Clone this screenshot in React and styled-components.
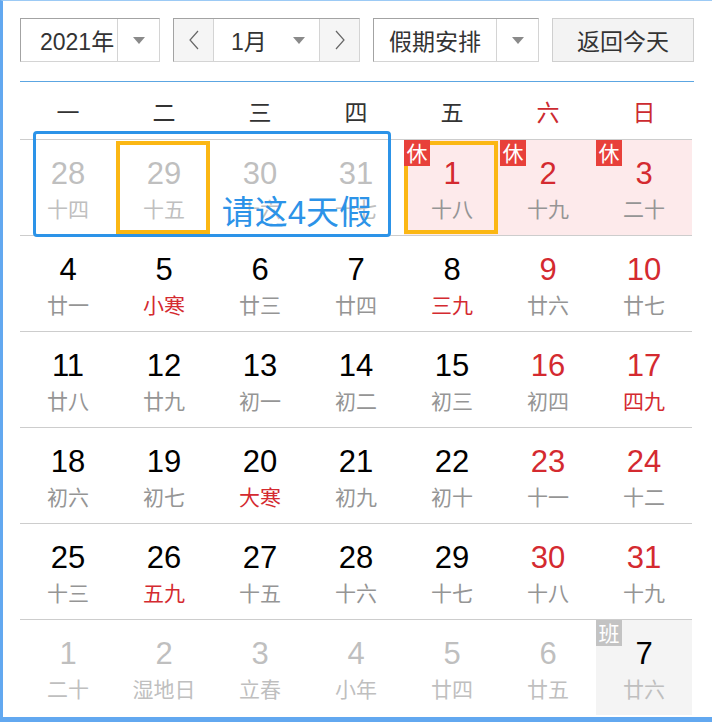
import React from 'react';
import styled, { createGlobalStyle } from 'styled-components';

const GlobalStyle = createGlobalStyle`
  html, body {
    margin: 0;
    padding: 0;
    background: #fff;
  }
  body {
    font-family: "Liberation Sans", "Noto Sans CJK SC", sans-serif;
  }
`;

const Frame = styled.div`
  width: 712px;
  height: 722px;
  box-sizing: border-box;
  border-left: 3px solid #62a8f0;
  border-top: 1px solid #9ccaf5;
  border-bottom: 5px solid #62a8f0;
  padding: 17px 0 0 17px;
  overflow: hidden;
`;

const Toolbar = styled.div`
  display: flex;
  gap: 13px;
  height: 44px;
  width: 674px;
`;

const Select = styled.div`
  display: flex;
  height: 44px;
  box-sizing: border-box;
  border-top: 1px solid #a3a3a3;
  border-left: 1px solid #a3a3a3;
  border-right: 1px solid #d4d4d4;
  border-bottom: 1px solid #d4d4d4;
  background: #fff;
`;

const SelectText = styled.div`
  width: ${({ w }) => w}px;
  display: flex;
  align-items: center;
  justify-content: ${({ pad }) => (pad ? 'flex-start' : 'center')};
  padding-left: ${({ pad }) => pad || 0}px;
  box-sizing: border-box;
  font-size: 23px;
  color: #333;
`;

const ArrowBox = styled.div`
  width: ${({ w }) => w || 42}px;
  display: flex;
  align-items: center;
  justify-content: center;
  border-left: ${({ plain }) => (plain ? 'none' : '1px solid #d4d4d4')};
`;

const Caret = styled.span`
  width: 0;
  height: 0;
  border-left: 6px solid transparent;
  border-right: 6px solid transparent;
  border-top: 7px solid #8a8a8a;
`;

const NavButton = styled.div`
  width: ${({ w }) => w}px;
  display: flex;
  align-items: center;
  justify-content: center;
  background: #f5f5f5;
  border-left: ${({ divider }) => (divider ? '1px solid #d4d4d4' : 'none')};
  border-right: ${({ divRight }) => (divRight ? '1px solid #d4d4d4' : 'none')};
`;

const TodayButton = styled.div`
  width: 144px;
  height: 44px;
  box-sizing: border-box;
  border: 1px solid #cfcfcf;
  background: #f3f3f3;
  display: flex;
  align-items: center;
  justify-content: center;
  font-size: 23px;
  color: #333;
`;

const Divider = styled.div`
  width: 674px;
  height: 1px;
  background: #5ca6e2;
  margin-top: 19px;
`;

const Board = styled.div`
  width: 672px;
`;

const WeekHeader = styled.div`
  display: grid;
  grid-template-columns: repeat(7, 96px);
  height: 57px;
`;

const WeekDay = styled.div`
  display: flex;
  align-items: center;
  justify-content: center;
  font-size: 23px;
  color: ${({ red }) => (red ? '#cc2a30' : '#333')};
`;

const Row = styled.div`
  position: relative;
  display: grid;
  grid-template-columns: repeat(7, 96px);
  height: 96px;
  box-sizing: border-box;
  border-top: 1px solid #cdcdcd;
`;

const Cell = styled.div`
  position: relative;
  display: flex;
  flex-direction: column;
  align-items: center;
  padding-top: 17px;
  background: ${({ bg }) => bg || 'transparent'};
`;

const DayNum = styled.div`
  font-size: 31px;
  line-height: 34px;
  color: ${({ c }) => c};
`;

const Lunar = styled.div`
  margin-top: 6px;
  font-size: 21px;
  line-height: 25px;
  color: ${({ c }) => c};
`;

const Badge = styled.div`
  position: absolute;
  left: 0;
  top: 0;
  width: 26px;
  height: 26px;
  display: flex;
  align-items: center;
  justify-content: center;
  font-size: 21px;
  line-height: 1;
  color: #fff;
  background: ${({ bg }) => bg};
  z-index: 3;
`;

const PickBox = styled.div`
  position: absolute;
  left: 0;
  top: 1px;
  width: 94px;
  height: 93px;
  box-sizing: border-box;
  border: 4px solid #fbb714;
  z-index: 2;
`;

const LeaveBox = styled.div`
  position: absolute;
  left: 13px;
  top: -9px;
  width: 358px;
  height: 106px;
  box-sizing: border-box;
  border: 3px solid #2c93e8;
  border-radius: 4px;
  z-index: 4;
  pointer-events: none;
`;

const LeaveText = styled.div`
  position: absolute;
  right: 16px;
  bottom: 0;
  font-size: 33px;
  line-height: 42px;
  color: #2c93e8;
`;

const Chevron = ({ dir }) => (
  <svg width="12" height="22" viewBox="0 0 12 22">
    <path
      d={dir === 'left' ? 'M10 2 L2 11 L10 20' : 'M2 2 L10 11 L2 20'}
      fill="none"
      stroke="#666"
      strokeWidth="1.2"
    />
  </svg>
);

const BLACK = '#000';
const RED = '#d42a30';
const GREY = '#959595';
const FAINT = '#bfbfbf';
const PINK = '#fdeaeb';

// n: day, l: lunar, t: type
const rows = [
  [
    { n: 28, l: '十四', t: 'other' },
    { n: 29, l: '十五', t: 'other', pick: true },
    { n: 30, l: '十六', t: 'other' },
    { n: 31, l: '十七', t: 'other' },
    { n: 1, l: '十八', t: 'rest', pick: true },
    { n: 2, l: '十九', t: 'rest' },
    { n: 3, l: '二十', t: 'rest' },
  ],
  [
    { n: 4, l: '廿一' },
    { n: 5, l: '小寒', term: true },
    { n: 6, l: '廿三' },
    { n: 7, l: '廿四' },
    { n: 8, l: '三九', term: true },
    { n: 9, l: '廿六', t: 'weekend' },
    { n: 10, l: '廿七', t: 'weekend' },
  ],
  [
    { n: 11, l: '廿八' },
    { n: 12, l: '廿九' },
    { n: 13, l: '初一' },
    { n: 14, l: '初二' },
    { n: 15, l: '初三' },
    { n: 16, l: '初四', t: 'weekend' },
    { n: 17, l: '四九', t: 'weekend', term: true },
  ],
  [
    { n: 18, l: '初六' },
    { n: 19, l: '初七' },
    { n: 20, l: '大寒', term: true },
    { n: 21, l: '初九' },
    { n: 22, l: '初十' },
    { n: 23, l: '十一', t: 'weekend' },
    { n: 24, l: '十二', t: 'weekend' },
  ],
  [
    { n: 25, l: '十三' },
    { n: 26, l: '五九', term: true },
    { n: 27, l: '十五' },
    { n: 28, l: '十六' },
    { n: 29, l: '十七' },
    { n: 30, l: '十八', t: 'weekend' },
    { n: 31, l: '十九', t: 'weekend' },
  ],
  [
    { n: 1, l: '二十', t: 'other' },
    { n: 2, l: '湿地日', t: 'other' },
    { n: 3, l: '立春', t: 'other' },
    { n: 4, l: '小年', t: 'other' },
    { n: 5, l: '廿四', t: 'other' },
    { n: 6, l: '廿五', t: 'other' },
    { n: 7, l: '廿六', t: 'work' },
  ],
];

const cellLook = (d) => {
  switch (d.t) {
    case 'other':
      return { num: FAINT, lunar: FAINT };
    case 'rest':
      return { num: RED, lunar: GREY, bg: PINK, badge: '休', badgeBg: '#e8403a' };
    case 'weekend':
      return { num: RED, lunar: d.term ? RED : GREY };
    case 'work':
      return { num: BLACK, lunar: FAINT, bg: '#f4f4f4', badge: '班', badgeBg: '#c3c3c3' };
    default:
      return { num: BLACK, lunar: d.term ? RED : GREY };
  }
};

const weekDays = ['一', '二', '三', '四', '五', '六', '日'];

export default function App() {
  return (
    <>
      <GlobalStyle />
      <Frame>
        <Toolbar>
          <Select>
            <SelectText w={96} pad={19}>2021年</SelectText>
            <ArrowBox w={41}>
              <Caret />
            </ArrowBox>
          </Select>
          <Select>
            <NavButton w={39} divRight>
              <Chevron dir="left" />
            </NavButton>
            <SelectText w={64} pad={17}>1月</SelectText>
            <ArrowBox w={41} plain>
              <Caret />
            </ArrowBox>
            <NavButton w={39} divider>
              <Chevron dir="right" />
            </NavButton>
          </Select>
          <Select>
            <SelectText w={122}>假期安排</SelectText>
            <ArrowBox w={41}>
              <Caret />
            </ArrowBox>
          </Select>
          <TodayButton>返回今天</TodayButton>
        </Toolbar>
        <Divider />
        <Board>
          <WeekHeader>
            {weekDays.map((w, i) => (
              <WeekDay key={w} red={i >= 5}>
                {w}
              </WeekDay>
            ))}
          </WeekHeader>
          {rows.map((row, ri) => (
            <Row key={ri}>
              {row.map((d, ci) => {
                const look = cellLook(d);
                return (
                  <Cell key={ci} bg={look.bg}>
                    {look.badge && <Badge bg={look.badgeBg}>{look.badge}</Badge>}
                    {d.pick && <PickBox />}
                    <DayNum c={look.num}>{d.n}</DayNum>
                    <Lunar c={look.lunar}>{d.l}</Lunar>
                  </Cell>
                );
              })}
              {ri === 0 && (
                <LeaveBox>
                  <LeaveText>请这4天假</LeaveText>
                </LeaveBox>
              )}
            </Row>
          ))}
        </Board>
      </Frame>
    </>
  );
}
